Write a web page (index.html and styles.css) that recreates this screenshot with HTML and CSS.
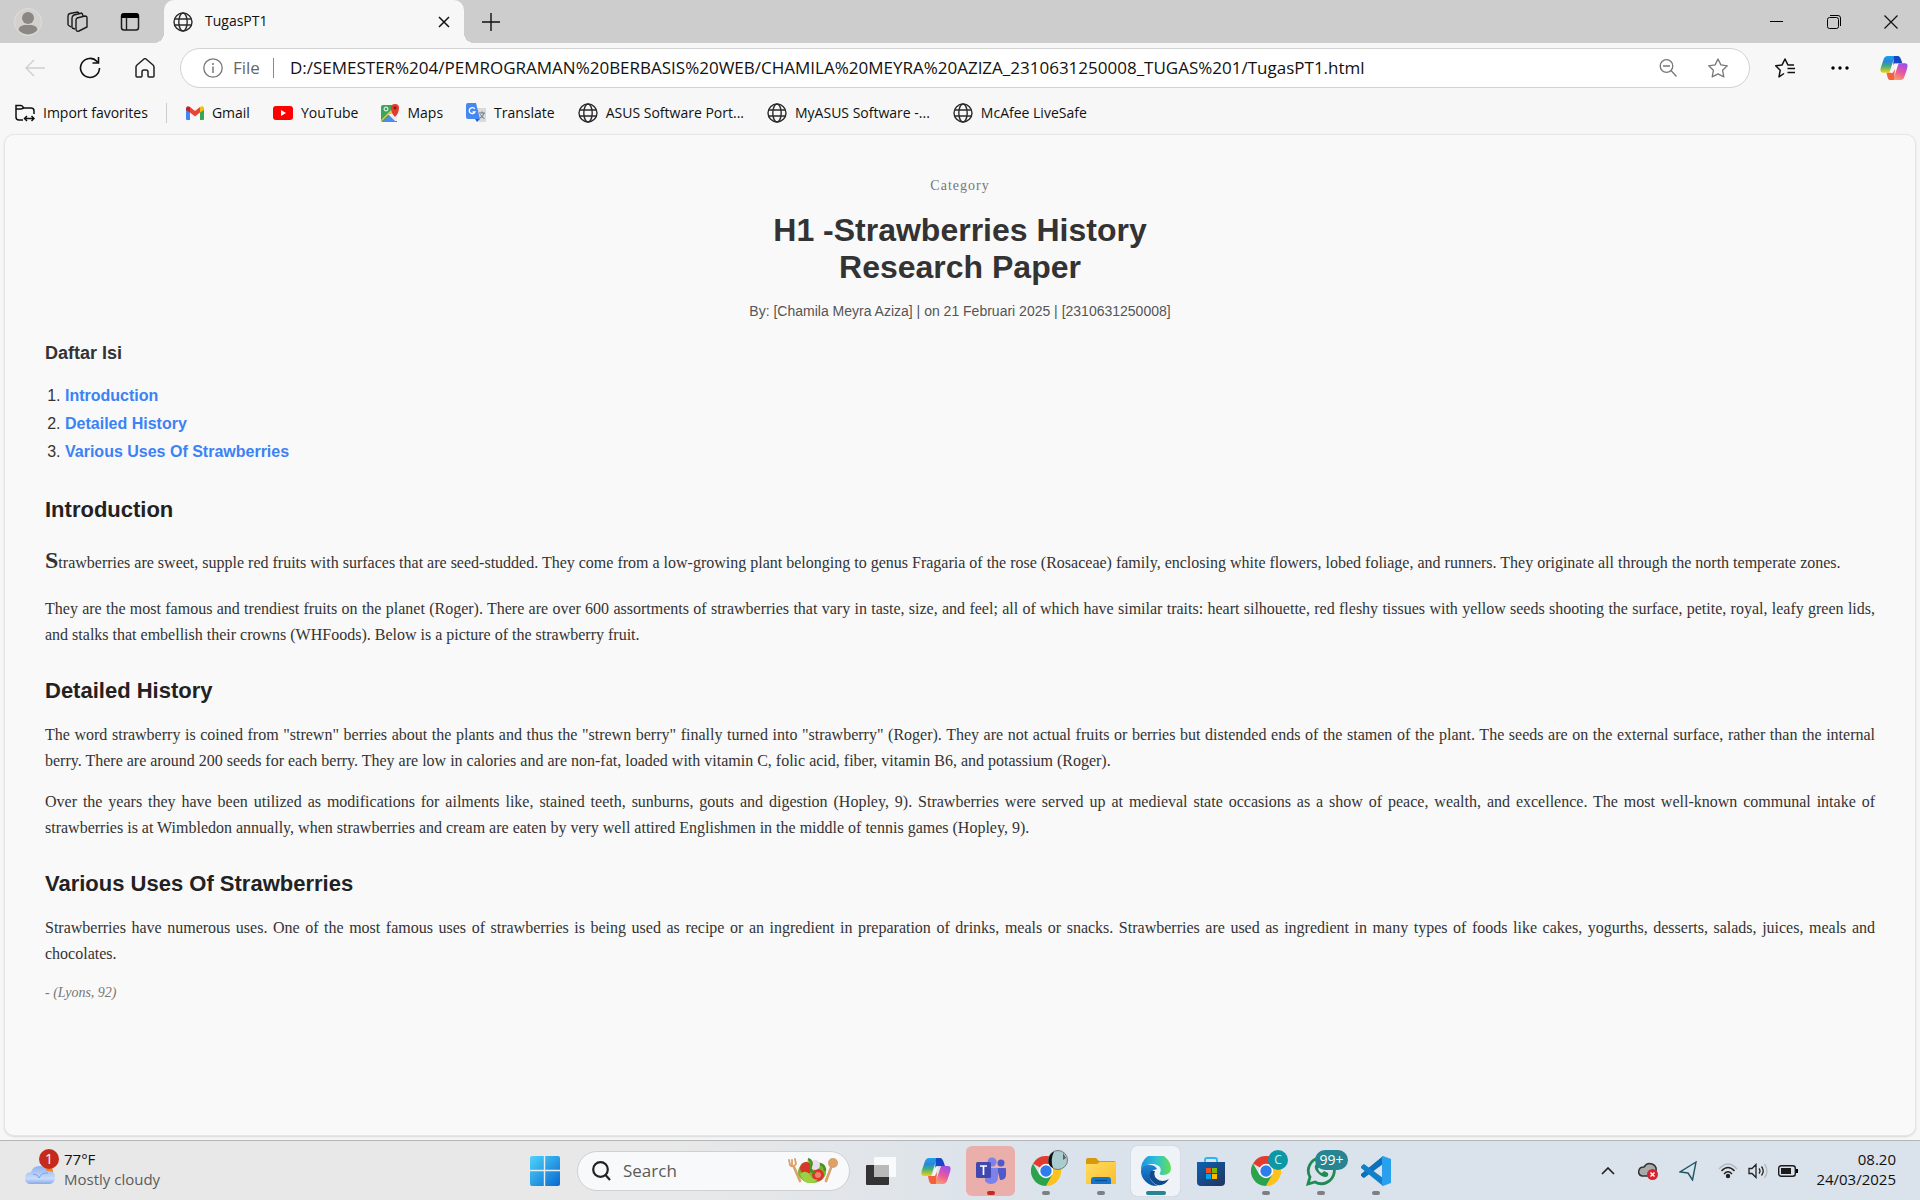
FILE: index.html
```html
<!DOCTYPE html>
<html lang="en">
<head>
<meta charset="utf-8">
<title>TugasPT1</title>
<link rel="stylesheet" href="styles.css">
</head>
<body>
<svg class="defs" aria-hidden="true">
  <defs>
    <linearGradient id="cpA" x1="0" y1="0" x2="0" y2="1"><stop offset="0" stop-color="#1ba0ef"/><stop offset=".35" stop-color="#2b86d9"/><stop offset=".6" stop-color="#3fae7a"/><stop offset="1" stop-color="#f6cf16"/></linearGradient>
    <linearGradient id="cpB" x1=".8" y1="0" x2=".3" y2="1"><stop offset="0" stop-color="#9a4df0"/><stop offset=".5" stop-color="#e8589f"/><stop offset="1" stop-color="#ffa764"/></linearGradient>
    <linearGradient id="win" x1="0" y1="0" x2="1" y2="1"><stop offset="0" stop-color="#4fd3fb"/><stop offset="1" stop-color="#0669cf"/></linearGradient>
    <linearGradient id="edA" x1="0" y1="0" x2="1" y2="0"><stop offset="0" stop-color="#1d91de"/><stop offset=".5" stop-color="#2fc0d8"/><stop offset="1" stop-color="#62e04d"/></linearGradient>
    <linearGradient id="edB" x1="0" y1="0" x2="0" y2="1"><stop offset="0" stop-color="#1b86d6"/><stop offset="1" stop-color="#0c4f9e"/></linearGradient>
    <linearGradient id="cloud" x1="0" y1="0" x2="0" y2="1"><stop offset="0" stop-color="#8fb2f3"/><stop offset=".7" stop-color="#c9dcfa"/><stop offset="1" stop-color="#86a8ea"/></linearGradient>
    <linearGradient id="folder" x1="0" y1="0" x2="1" y2="1"><stop offset="0" stop-color="#ffdc62"/><stop offset="1" stop-color="#fbbd2c"/></linearGradient>
    <linearGradient id="store" x1="0" y1="0" x2="1" y2="1"><stop offset="0" stop-color="#0c62b5"/><stop offset="1" stop-color="#22345c"/></linearGradient>
    <symbol id="globe" viewBox="0 0 20 20"><g fill="none" stroke="#2b2b2b" stroke-width="1.4"><circle cx="10" cy="10" r="9"/><ellipse cx="10" cy="10" rx="4.2" ry="9"/><path d="M1.8 7h16.4M1.8 13h16.4"/></g></symbol>
    <symbol id="copilot" viewBox="0 0 30 28"><path d="M21 1h-5l-3 9-3 9H3C0 19 0 16 1 13L4 4C5 2 6 1 8 1z" fill="url(#cpA)"/><path d="M15 1h4c2 0 3 2 4 5l1 3h-5c-3 0-4 2-5 4z" fill="#1847c4"/><path d="M9 27h5l3-9 3-9h7c3 0 3 3 2 6l-3 9c-1 2-2 3-4 3z" fill="url(#cpB)"/><path d="M15 27h-4c-2 0-3-2-4-8h4c3 0 4-2 5-4z" fill="#f4613f"/><path d="M17 9l-3 10h-3l3-8c1-2 2-2 3-2z" fill="#f4f4f8"/></symbol>
    <symbol id="chrome" viewBox="0 0 30 30"><path d="M15 15L2 7.500A15 15 0 0 1 28 7.500z" fill="#e33b2e"/><path d="M28 7.500A15 15 0 0 1 15 30L15 15z" fill="#fcc31e"/><path d="M2 7.500A15 15 0 0 0 15 30L21.500 18.700 8.500 18.700z" fill="#2ba24c"/><path d="M15 8h13a15 15 0 0 1-13 22l6.500-11.300z" fill="#fcc31e"/><circle cx="15" cy="15" r="7.200" fill="#fff"/><circle cx="15" cy="15" r="5.700" fill="#2f7ded"/></symbol>
  </defs>
</svg>

<header class="browser">
  <div class="tabstrip">
    <button class="ib avatar" aria-label="Profile"><svg width="28" height="28" viewBox="0 0 28 28"><circle cx="14" cy="14" r="13.500" fill="#d3d1ce" stroke="#e0dedb"/><circle cx="14" cy="10" r="6" fill="#8b8783"/><path d="M4.500 22c1-5 5-5 9.500-5s8.500 0 9.500 5a12.500 12.500 0 0 1-19 0z" fill="#8b8783"/></svg></button>
    <button class="ib spaces" aria-label="Workspaces"><svg width="22" height="22" viewBox="0 0 22 22" fill="none" stroke="#1c1c1c" stroke-width="1.400"><path d="M11 7l8-2q2 0 2 2v9l-8 4q-3 1-3-2V9q0-2 2-2.300zM6 17V7q0-2 2-3l8-2M6 17l3 1M2 14V5q0-2 2-2.500L12 1M2 14l3 2M16 2l1 3M12 1l1 1.500"/></svg></button>
    <button class="ib" aria-label="Tab actions"><svg width="20" height="20" viewBox="0 0 20 20"><rect x="1.500" y="2" width="17" height="16" rx="2.500" fill="none" stroke="#1c1c1c" stroke-width="1.500"/><path d="M1 6V4q0-3 3-3h12q3 0 3 3v2z"/><path d="M6.500 6v12" stroke="#1c1c1c" stroke-width="1.400"/></svg></button>
    <div class="tab"><svg width="20" height="20"><use href="#globe"/></svg><span class="tabname">TugasPT1</span><button class="ib close" aria-label="Close tab"><svg width="12" height="12" viewBox="0 0 12 12" stroke="#111" stroke-width="1.500"><path d="M1 1l10 10M11 1L1 11"/></svg></button></div>
    <button class="ib plus" aria-label="New tab"><svg width="18" height="18" viewBox="0 0 18 18" stroke="#111" stroke-width="1.400"><path d="M9 0v18M0 9h18"/></svg></button>
    <div class="wincontrols">
      <button class="ib" aria-label="Minimize"><svg width="13" height="13" viewBox="0 0 13 13"><path d="M0 6.500h13" stroke="#000"/></svg></button>
      <button class="ib" aria-label="Restore"><svg width="14" height="14" viewBox="0 0 14 14" fill="none" stroke="#000"><rect x=".5" y="2.500" width="11" height="11" rx="2"/><path d="M3 .5h8q2.500 0 2.500 2.500v8"/></svg></button>
      <button class="ib" aria-label="Close"><svg width="14" height="14" viewBox="0 0 14 14" stroke="#111" stroke-width="1.200"><path d="M.5.5l13 13M13.500.5l-13 13"/></svg></button>
    </div>
  </div>

  <div class="toolbar">
    <button class="ib" aria-label="Back" disabled><svg width="20" height="18" viewBox="0 0 20 18" fill="none" stroke="#cfcfcf" stroke-width="1.400"><path d="M20 9H1M9 1L1 9l8 8"/></svg></button>
    <button class="ib" aria-label="Refresh"><svg width="22" height="22" viewBox="0 0 22 22" fill="none" stroke="#111" stroke-width="1.600"><path d="M20.500 11A9.500 9.500 0 1 1 18 4.500l1 1.500M19.500 0v6h-6"/></svg></button>
    <button class="ib" aria-label="Home"><svg width="20" height="20" viewBox="0 0 20 20" fill="none" stroke="#222" stroke-width="1.500"><path d="M1 9q0-1 1-2l7-6q1-.8 2 0l7 6q1 1 1 2v9q0 1-1 1h-4q-1 0-1-1v-4q0-2-2-2h-2q-2 0-2 2v4q0 1-1 1H2q-1 0-1-1z"/></svg></button>
    <form class="address">
      <svg width="20" height="20" viewBox="0 0 20 20"><circle cx="10" cy="10" r="9.200" fill="none" stroke="#777" stroke-width="1.300"/><path d="M10 8.500V15M10 5v2" stroke="#777" stroke-width="1.500"/></svg>
      <label for="url">File</label>
      <input id="url" type="text" value="D:/SEMESTER%204/PEMROGRAMAN%20BERBASIS%20WEB/CHAMILA%20MEYRA%20AZIZA_2310631250008_TUGAS%201/TugasPT1.html">
      <button type="button" class="ib" aria-label="Zoom out"><svg width="18" height="18" viewBox="0 0 18 18" fill="none" stroke="#777" stroke-width="1.300"><circle cx="7.500" cy="7" r="6.300"/><path d="M4 7h7M12 11.500l5.500 6"/></svg></button>
      <button type="button" class="ib" aria-label="Favorite this page"><svg width="20" height="20" viewBox="0 0 20 20" fill="none" stroke="#777" stroke-width="1.300" stroke-linejoin="round"><path d="M10 1l2.900 5.900 6.400.9-4.700 4.500 1.200 6.600-5.800-3-5.800 3 1.200-6.600L.7 7.800l6.400-.9z"/></svg></button>
    </form>
    <button class="ib" aria-label="Favorites"><svg width="20" height="20" viewBox="0 0 20 20" fill="none" stroke="#111" stroke-width="1.500" stroke-linejoin="round"><path d="M9 15.500L4 18.900l1.200-6.600L.7 7.800l6.400-.9L10 1l2.900 5.900H19M12.500 10.500H20M12.500 14.500H20"/></svg></button>
    <button class="ib" aria-label="Settings and more"><svg width="18" height="4" viewBox="0 0 18 4"><circle cx="2" cy="2" r="1.700"/><circle cx="9" cy="2" r="1.700"/><circle cx="16" cy="2" r="1.700"/></svg></button>
    <button class="ib copilot" aria-label="Copilot"><svg width="28" height="26"><use href="#copilot"/></svg></button>
  </div>

  <nav class="favorites">
    <a href="#import" class="import"><svg width="20" height="18" viewBox="0 0 20 18" fill="none" stroke="#111" stroke-width="1.500"><path d="M8 16H4q-3 0-3-3V1.500h5q1 0 2 1.500l1 1h7q3 0 3 3v3M1 5h5l3-1M9 14.500h10M12 12l-2.500 2.500L12 17M16.500 12l2.500 2.500-2.500 2.500"/></svg>Import favorites</a>
    <a href="#gmail"><svg width="18" height="14" viewBox="0 0 18 14"><path d="M0 2v11q0 1 1 1h3V5z" fill="#4285f4"/><path d="M14 5v9h3q1 0 1-1V2z" fill="#34a853"/><path d="M4 1l5 4 5-4v5.500l-5 4-5-4z" fill="#ea4335"/><path d="M0 2Q1-1 4 1v5.500L0 4z" fill="#c5221f"/><path d="M18 2q-1-3-4-1v5.500L18 4z" fill="#fbbc04"/></svg>Gmail</a>
    <a href="#youtube"><svg width="20" height="14" viewBox="0 0 20 14"><rect width="20" height="14" rx="3" fill="#f00"/><path d="M8 4v6l5-3z" fill="#fff"/></svg>YouTube</a>
    <a href="#maps"><svg width="18" height="18" viewBox="0 0 18 18"><path d="M0 3q0-2 2-2h14v17H2q-2 0-2-2z" fill="#3ba55c"/><path d="M0 16L13 3l3 4v9L9 9l-8 8z" fill="#f6c62f"/><path d="M2 18l7-7 7 7z" fill="#4c8bf5"/><path d="M7 10l7 7h2V9z" fill="#eee"/><path d="M14 13Q10 9 10 4a4 4 0 0 1 8 0q0 5-4 9z" fill="#e33b2e"/><circle cx="14" cy="4" r="1.400" fill="#7b1a13"/><circle cx="5" cy="5" r="2" fill="none" stroke="#fff"/></svg>Maps</a>
    <a href="#translate"><svg width="20" height="20" viewBox="0 0 20 20"><path d="M9 5h11v14H13z" fill="#dadada"/><path d="M0 2q0-2 2-2h8l4 16H2q-2 0-2-2z" fill="#4688f1"/><path d="M9 16h5l-3 3z" fill="#3058c8"/><path d="M8.800 6A3 3 0 1 0 9 9H6.500" fill="none" stroke="#fff" stroke-width="1.300"/><path d="M13 10h6M16 8.500V10M18 10q-1 4-4 5M14.500 11.500q1 3 4 4" fill="none" stroke="#607d8b"/></svg>Translate</a>
    <a href="#asus"><svg width="20" height="20"><use href="#globe"/></svg>ASUS Software Port...</a>
    <a href="#myasus"><svg width="20" height="20"><use href="#globe"/></svg>MyASUS Software -...</a>
    <a href="#mcafee"><svg width="20" height="20"><use href="#globe"/></svg>McAfee LiveSafe</a>
  </nav>
</header>

<main class="page">
  <div class="masthead">
    <p class="category">Category</p>
    <h1>H1 -Strawberries History Research Paper</h1>
    <p class="byline">By: [Chamila Meyra Aziza] | on 21 Februari 2025 | [2310631250008]</p>
  </div>
  <nav class="toc">
    <h3>Daftar Isi</h3>
    <ol>
      <li><a href="#introduction">Introduction</a></li>
      <li><a href="#history">Detailed History</a></li>
      <li><a href="#uses">Various Uses Of Strawberries</a></li>
    </ol>
  </nav>
  <section id="introduction" class="intro">
    <h2>Introduction</h2>
    <p class="lead">Strawberries are sweet, supple red fruits with surfaces that are seed-studded. They come from a low-growing plant belonging to genus Fragaria of the rose (Rosaceae) family, enclosing white flowers, lobed foliage, and runners. They originate all through the north temperate zones.</p>
    <p>They are the most famous and trendiest fruits on the planet (Roger). There are over 600 assortments of strawberries that vary in taste, size, and feel; all of which have similar traits: heart silhouette, red fleshy tissues with yellow seeds shooting the surface, petite, royal, leafy green lids, and stalks that embellish their crowns (WHFoods). Below is a picture of the strawberry fruit.</p>
  </section>
  <section id="history">
    <h2>Detailed History</h2>
    <p>The word strawberry is coined from "strewn" berries about the plants and thus the "strewn berry" finally turned into "strawberry" (Roger). They are not actual fruits or berries but distended ends of the stamen of the plant. The seeds are on the external surface, rather than the internal berry. There are around 200 seeds for each berry. They are low in calories and are non-fat, loaded with vitamin C, folic acid, fiber, vitamin B6, and potassium (Roger).</p>
    <p>Over the years they have been utilized as modifications for ailments like, stained teeth, sunburns, gouts and digestion (Hopley, 9). Strawberries were served up at medieval state occasions as a show of peace, wealth, and excellence. The most well-known communal intake of strawberries is at Wimbledon annually, when strawberries and cream are eaten by very well attired Englishmen in the middle of tennis games (Hopley, 9).</p>
  </section>
  <section id="uses">
    <h2>Various Uses Of Strawberries</h2>
    <p>Strawberries have numerous uses. One of the most famous uses of strawberries is being used as recipe or an ingredient in preparation of drinks, meals or snacks. Strawberries are used as ingredient in many types of foods like cakes, yogurths, desserts, salads, juices, meals and chocolates.</p>
    <p class="cite">- (Lyons, 92)</p>
  </section>
</main>

<footer class="taskbar">
  <button class="weather">
    <span class="wicon"><svg width="30" height="20" viewBox="0 0 30 20"><circle cx="22" cy="6" r="6" fill="#f58220"/><path d="M6 19q-6 0-6-6t6-6q2-6 8-6t8 5q8-1 8 6t-6 7z" fill="url(#cloud)"/><path d="M8 9q5 0 6 4 3-6 9-5" fill="none" stroke="#7f9fe0"/></svg><span class="badge">1</span></span>
    <span class="wtext"><span>77°F</span><span class="muted">Mostly cloudy</span></span>
  </button>
  <div class="apps">
    <button class="app" aria-label="Start"><svg width="30" height="30" viewBox="0 0 30 30" fill="url(#win)"><path d="M0 2q0-2 2-2h26q2 0 2 2v26q0 2-2 2H2q-2 0-2-2z"/><path d="M14.500 0v30M0 14.500h30" stroke="#e8edf2" stroke-width="1.400"/></svg></button>
    <label class="search"><svg width="19" height="20" viewBox="0 0 19 20" fill="none" stroke="#222" stroke-width="2.200"><circle cx="8.500" cy="8.500" r="7.300"/><path d="M13.500 14l4.500 5"/></svg><input type="text" placeholder="Search" aria-label="Search">
      <svg width="52" height="28" viewBox="0 0 52 28"><g fill="none" stroke="#dca069" stroke-width="2.600" stroke-linecap="round"><path d="M7 10l6 14M45 8l-6 16"/><path d="M2 3l1 5q3 3 6-1l-1-5M5 3v5" stroke-width="1.800"/></g><circle cx="46" cy="6" r="5" fill="#dca069"/><ellipse cx="25" cy="15" rx="14" ry="11" fill="#79b52c"/><circle cx="19" cy="11" r="6" fill="#d8352b"/><circle cx="31" cy="18" r="6" fill="#d8352b"/><circle cx="28" cy="8" r="5" fill="#e9def0"/><path d="M13 17q6-5 10 1t8 4q-3 4-9 4t-9-9z" fill="#9bd142"/><path d="M21 2q5 2 3 7t4 7M33 7q5 1 5 7" fill="none" stroke="#4e8f1d" stroke-width="2.500"/><circle cx="31" cy="18" r="3" fill="#f3806e"/></svg></label>
    <button class="app" aria-label="Task view"><svg width="30" height="28" viewBox="0 0 30 28"><rect y="8" width="23" height="20" rx="1" fill="#333"/><rect x="8" width="22" height="20" rx="1" fill="#fff" opacity=".8"/><rect x="8" y="8" width="15" height="12" fill="#b9b9b9"/></svg></button>
    <button class="app" aria-label="Copilot"><svg width="30" height="28"><use href="#copilot"/></svg></button>
    <button class="app alert" aria-label="Teams"><svg width="30" height="28" viewBox="0 0 30 28"><circle cx="16" cy="5" r="4.500" fill="#7b83eb"/><circle cx="25" cy="6" r="3.500" fill="#5059c9"/><path d="M21 11h8q1 0 1 1v6q0 5-6 5z" fill="#5059c9"/><path d="M9 11h13v9q0 7-7 7-4 0-6-3z" fill="#7b83eb"/><rect y="5" width="15" height="16" rx="1.500" fill="#4048b0"/><path d="M4 9h7M7.500 9v9" stroke="#fff" stroke-width="1.700"/></svg></button>
    <button class="app run" aria-label="Chrome"><svg width="30" height="30"><use href="#chrome"/></svg><svg class="over" width="20" height="20" viewBox="0 0 20 20"><circle cx="10" cy="10" r="9.500" fill="#a9ccd0" stroke="#777"/><path d="M6 1.500Q2 10 5 18Q0 16 .5 10T6 1.500z" fill="#111"/><path d="M15 3l3 5-3 2z" fill="#6d5b52"/></svg></button>
    <button class="app run" aria-label="File Explorer"><svg width="30" height="28" viewBox="0 0 30 28"><path d="M0 3q0-2 2-2h8l3 3h15q2 0 2 2v4H0z" fill="#d99a09"/><path d="M0 7h11l3-2h16v22H0z" fill="url(#folder)"/><path d="M5 27v-4q0-3 3-3h14q3 0 3 3v4z" fill="#1473cc"/><path d="M9 23.500h12" stroke="#0a4d93" stroke-width="1.300"/></svg></button>
    <button class="app active" aria-label="Edge"><svg width="30" height="30" viewBox="0 0 30 30"><path d="M0 14A15 15 0 0 1 30 12q0 7-8 7-4 0-3-2 3-7-6-9Q4 7 0 14z" fill="url(#edA)"/><path d="M0 14q3-6 9-5 5 0 7 4-7 1-7 8 1 6 8 8.700A15 15 0 0 1 0 14z" fill="url(#edB)"/><path d="M10 15q-4 7 4 13 8 4 14-5-7 4-12 0-4-3-2-8z" fill="#114a8b"/></svg></button>
    <button class="app" aria-label="Microsoft Store"><svg width="30" height="30" viewBox="0 0 30 30"><path d="M9 7V4q0-2 2-2h8q2 0 2 2v3" fill="none" stroke="#2bb5f2" stroke-width="1.800"/><path d="M1 6h28v20q0 4-4 4H5q-4 0-4-4z" fill="url(#store)"/><path d="M10 12h5v5h-5z" fill="#f25022"/><path d="M16 12h5v5h-5z" fill="#7fba00"/><path d="M10 18h5v5h-5z" fill="#00a4ef"/><path d="M16 18h5v5h-5z" fill="#ffb900"/></svg></button>
    <button class="app run" aria-label="Chrome profile C"><svg width="30" height="30"><use href="#chrome"/></svg><span class="over initial">C</span></button>
    <button class="app run" aria-label="WhatsApp"><svg width="30" height="30" viewBox="0 0 30 30"><path d="M2 28l2-7A13 13 0 1 1 9 26z" fill="none" stroke="#1f8a55" stroke-width="2.800"/><path d="M10 8q-3 3 1 8t9 5q3-1 2-4l-4-2-2 2q-3-1-4-4l1-2-1-3z" fill="#1f8a55"/></svg><span class="over count">99+</span></button>
    <button class="app run" aria-label="Visual Studio Code"><svg width="30" height="30" viewBox="0 0 30 30"><path d="M22 0v8L3 22q-1 0-3-2.500V18z" fill="#0a6fbc"/><path d="M22 30v-8L3 8Q2 8 0 10.500V12z" fill="#127fcb"/><path d="M22 0l8 3v24l-8 3q-1 0-1-1V1z" fill="#28a0ee"/></svg></button>
  </div>
  <div class="tray">
    <button class="ib" aria-label="Show hidden icons"><svg width="14" height="8" viewBox="0 0 14 8" fill="none" stroke="#1c1c1c" stroke-width="1.600"><path d="M1 7l6-6 6 6"/></svg></button>
    <button class="ib" aria-label="OneDrive"><svg width="20" height="18" viewBox="0 0 20 18"><path d="M4 14Q0 13 .7 9T6 5q3-5 8-3t4 7l-6 5z" fill="#aaa" stroke="#333" stroke-width="1.500"/><circle cx="14.500" cy="12.500" r="5.500" fill="#d8232f"/><path d="M12.500 10.500l4 4m0-4l-4 4" stroke="#fff" stroke-width="1.500"/></svg></button>
    <button class="ib" aria-label="Location"><svg width="18" height="20" viewBox="0 0 18 20" fill="none" stroke="#1f5563" stroke-width="1.400"><path d="M17 1L1 11l8 1 4.500 7z"/></svg></button>
    <button class="ib status" aria-label="Network, volume, battery">
      <svg width="20" height="16" viewBox="0 0 20 16" fill="none" stroke="#222" stroke-width="1.400"><path d="M1 6q9-10 18 0" stroke="#b5bac0"/><path d="M3.500 8q6.500-7 13 0M6 11q4-4.500 8 0"/><circle cx="10" cy="13" r="1.500" fill="#222"/></svg>
      <svg width="20" height="16" viewBox="0 0 20 16" fill="none" stroke="#222" stroke-width="1.300"><path d="M1 5.500h3l4-4v13l-4-4H1zM11 5.500q2 2.500 0 5M13.500 3.500q3.500 4.500 0 9"/><path d="M16.500 1q5 7 0 14" stroke="#b5bac0"/></svg>
      <svg width="20" height="12" viewBox="0 0 20 12"><rect x=".7" y=".7" width="16.600" height="10.600" rx="2.500" fill="none" stroke="#1c1c1c" stroke-width="1.400"/><rect x="3" y="3" width="10" height="6" fill="#1c1c1c"/><path d="M18 4h2v4h-2z"/></svg>
    </button>
    <button class="clock"><span>08.20</span><span>24/03/2025</span></button>
  </div>
</footer>
</body>
</html>
```
FILE: styles.css
```css
* { box-sizing: border-box; }
body {
  margin: 0;
  min-height: 100vh;
  display: flex;
  flex-direction: column;
  background: #f7f7f7;
  font-family: "Open Sans", "Noto Sans", sans-serif;
  font-size: 14px;
  color: #111;
}
button, input { font: inherit; color: inherit; border: 0; padding: 0; background: none; outline: 0; }
svg { display: block; flex: none; }
.defs { position: absolute; width: 0; height: 0; }
.ib { display: flex; align-items: center; justify-content: center; flex: none; }

/* Tab strip */
.tabstrip { display: flex; align-items: center; height: 43px; background: #cdcdcd; }
.tabstrip > .ib { width: 53px; height: 43px; }
.tabstrip > .avatar { width: 56px; }
.tabstrip > .spaces { width: 42px; margin-right: 5px; }
.tab {
  position: relative;
  display: flex;
  align-items: center;
  gap: 12px;
  width: 300px;
  height: 43px;
  margin-left: 8px;
  padding: 0 14px 0 9px;
  background: #f7f7f7;
  border-radius: 10px 10px 0 0;
}
.tab::before, .tab::after { content: ""; position: absolute; bottom: 0; width: 10px; height: 10px; }
.tab::before { left: -10px; background: radial-gradient(circle at 0 0, #cdcdcd 10px, #f7f7f7 10px); }
.tab::after { right: -10px; background: radial-gradient(circle at 100% 0, #cdcdcd 10px, #f7f7f7 10px); }
.tabname { padding-bottom: 2px; }
.tab .close { margin-left: auto; }
.wincontrols { display: flex; margin-left: auto; padding-right: 1px; }
.wincontrols .ib { width: 57px; height: 43px; }

/* Toolbar */
.toolbar { display: flex; align-items: center; height: 50px; padding-left: 7px; }
.toolbar > .ib { width: 55px; height: 40px; }
.toolbar > .copilot { width: 53px; }
.address {
  flex: 1;
  display: flex;
  align-items: center;
  height: 40px;
  margin: 0 7px 0 8px;
  padding: 0 6px 0 22px;
  background: #fff;
  border: 1px solid #d2d2d2;
  border-radius: 20px;
  font-size: 17px;
}
.address label { margin: 0 12px 0 10px; padding-right: 13px; line-height: 20px; border-right: 1px solid #888; color: #666; }
.address input { flex: 1; min-width: 0; padding: 0 0 2px 4px; }
.address .ib { width: 50px; height: 36px; }

/* Favourites bar */
.favorites { display: flex; align-items: center; gap: 23px; height: 41px; padding: 0 15px 2px; }
.favorites a { display: flex; align-items: center; gap: 8px; color: #111; text-decoration: none; white-space: nowrap; }
.favorites .import { margin-right: -4px; padding-right: 18px; border-right: 1px solid #ccc; line-height: 20px; }

/* Document */
.page {
  flex: 1;
  margin: 0 4px 4px;
  padding: 38px 40px 40px;
  background: #f9f9f9;
  border: 1px solid #e6e6e6;
  border-radius: 10px;
  box-shadow: 0 1px 2px #d8d8d8;
  color: #333;
  font: 16px/26px "Liberation Serif", "Times New Roman", serif;
}
.page p, .page h1, .page h2, .page h3, .page ol { margin: 0; }
.masthead { text-align: center; }
.masthead .category { font-size: 14px; letter-spacing: 1px; color: #777; }
.page h1, .page h2, .page h3, .toc, .byline { font-family: "Liberation Sans", Arial, sans-serif; }
.page .masthead h1 { max-width: 400px; margin: 13px auto 12px; font-size: 32px; line-height: 37px; }
.masthead .byline { font-size: 14px; color: #555; }
.page .toc h3 { margin: 16px 0 17px; font-size: 18px; }
.toc ol { padding-left: 20px; }
.toc li { margin-bottom: 2px; }
.toc a { color: #3b82f6; font-weight: bold; text-decoration: none; }
.page section { margin-bottom: 30px; }
.page section h2 { margin-bottom: 18px; font-size: 22px; line-height: 26px; color: #222; }
.page section p { margin-bottom: 15px; text-align: justify; }
.page .toc + section { margin-top: 32px; }
.page .intro h2 { margin-bottom: 24px; }
.page .intro .lead { margin-bottom: 20px; }
.lead::first-letter { font-size: 24px; font-weight: bold; }
.page section .cite { font-size: 14px; line-height: 22px; font-style: italic; color: #777; }

/* Taskbar */
.taskbar {
  display: grid;
  grid-template-columns: 1fr auto 1fr;
  align-items: center;
  height: 60px;
  border-top: 1px solid #b2b6b8;
  background: linear-gradient(90deg, #e8e8e8 35%, #dae2eb 55%);
}
.weather { justify-self: start; display: flex; gap: 9px; padding-left: 25px; text-align: left; }
.wicon { position: relative; padding-top: 16px; }
.badge { position: absolute; left: 14px; top: 0; width: 20px; height: 20px; border-radius: 50%; background: #c42b1c; color: #fff; line-height: 20px; text-align: center; }
.wtext, .clock { display: flex; flex-direction: column; padding-bottom: 4px; font-size: 15px; line-height: 20px; }
.muted { color: #5c5c5c; }
.apps { display: flex; align-items: center; }
.app { position: relative; display: flex; align-items: center; justify-content: center; width: 49px; height: 50px; margin: 0 3px; border-radius: 6px; }
.run::after, .active::after, .alert::after { content: ""; position: absolute; bottom: 1px; width: 8px; height: 4px; border-radius: 2px; background: #7d7f82; }
.active { background: #eff3f7; box-shadow: 0 0 1px #aaa; }
.active::after { width: 20px; background: #268591; }
.alert { background: #eaaeab; }
.alert::after { background: #c42b1c; }
.over { position: absolute; top: 4px; left: 27px; }
.initial { width: 20px; height: 20px; border-radius: 50%; background: #0e98a6; color: #d8f2f4; font-size: 12px; line-height: 20px; }
.count { left: 19px; width: 33px; height: 20px; border-radius: 10px; background: #268591; color: #fff; font-size: 14px; line-height: 20px; }
.search {
  display: flex;
  align-items: center;
  width: 273px;
  height: 40px;
  margin: 0 3px 0 5px;
  padding: 0 10px 0 14px;
  border: 1px solid #d0d0d0;
  border-radius: 20px;
  background: #f8f9fa;
  font-size: 17px;
}
.search input { flex: 1; min-width: 0; padding-left: 12px; }
.search input::placeholder { color: #5a5a5a; opacity: 1; }
.tray { justify-self: end; display: flex; align-items: center; padding-right: 24px; }
.tray .ib { width: 40px; height: 40px; }
.tray .status { width: auto; gap: 10px; padding: 0 18px 0 10px; }
.tray .clock { text-align: right; }
```
